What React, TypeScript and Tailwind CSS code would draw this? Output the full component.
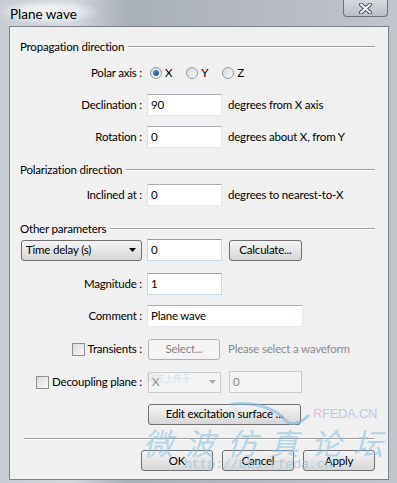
import React from "react";

const font = { fontFamily: 'Lato, "Noto Sans", Arial, sans-serif' };

function TextBox({ value, w = "w-[75px]", disabled = false, focus = false }: { value: string; w?: string; disabled?: boolean; focus?: boolean }) {
  return (
    <div
      className={`${w} h-[22px] flex items-center px-[3px] border ${
        disabled
          ? "bg-[#f4f4f4] border-[#c9cbcf] text-[#8a8a8a]"
          : focus
          ? "bg-white border-[#c5daed] border-t-[#7da2ce] text-black"
          : "bg-white border-[#e3e9ef] border-t-[#abadb3] border-l-[#e2e3ea] text-black"
      }`}
    >
      {value}
    </div>
  );
}

function Button({ label, w, disabled = false }: { label: string; w: string; disabled?: boolean }) {
  return (
    <div
      className={`${w} h-[21px] flex items-center justify-center rounded-[3px] border ${
        disabled
          ? "border-[#adb2b5] bg-[#f4f4f4] text-[#838383]"
          : "border-[#707070] bg-linear-to-b from-[#f4f4f4] via-[#e6e6e6] to-[#d6d6d6] text-black"
      }`}
    >
      {label}
    </div>
  );
}

function Radio({ checked, label }: { checked?: boolean; label: string }) {
  return (
    <div className="flex items-center gap-[3px]">
      <div className="w-[12px] h-[12px] rounded-full border border-[#9a9a9a] bg-linear-to-br from-[#d8d8d8] to-[#fafafa] flex items-center justify-center">
        {checked && <div className="w-[6px] h-[6px] rounded-full bg-linear-to-br from-[#5a8fcf] to-[#1f4f9a]" />}
      </div>
      <span>{label}</span>
    </div>
  );
}

function Checkbox() {
  return <div className="w-[13px] h-[13px] border border-[#8f8f8f] bg-linear-to-br from-[#dcdcdc] to-[#f8f8f8] mr-[3px]" />;
}

function Header({ title, mt }: { title: string; mt: string }) {
  return (
    <div className={`${mt} h-[14px] flex items-center gap-[4px] pr-[3px]`}>
      <span className="whitespace-nowrap">{title}</span>
      <div className="flex-1 h-[2px] border-t border-t-[#a0a0a0] border-b border-b-white" />
    </div>
  );
}

function Row({ label, mt, children, lead }: { label: string; mt: string; children: React.ReactNode; lead?: React.ReactNode }) {
  return (
    <div className={`${mt} h-[22px] flex items-center`}>
      <div className="w-[122px] flex items-center justify-end whitespace-nowrap">
        {lead}
        <span>{label}</span>
      </div>
      <div className="ml-[5px] flex items-center">{children}</div>
    </div>
  );
}

export default function App() {
  return (
    <div
      className="relative w-[397px] h-[483px] overflow-hidden text-[11.5px] tracking-[-0.2px] text-black bg-[linear-gradient(90deg,#c9cdd3_0%,#d4d8dd_18%,#a9afb9_32%,#b3b8c1_60%,#c1c6cd_100%)]"
      style={font}
    >
      {/* title bar */}
      <div className="h-[26px] flex items-start">
        <div className="pl-[10px] pt-[4px] text-[13.5px] tracking-normal text-black bg-[radial-gradient(ellipse_at_center,#eef0f3_30%,transparent_75%)] pr-[20px]">
          Plane wave
        </div>
        <div className="ml-auto mr-[9px] w-[45px] h-[17px] rounded-b-[4px] border border-t-0 border-[#6b717a] bg-linear-to-b from-[#d5d9df] to-[#b8bec7] flex items-center justify-center">
          <svg width="13" height="11" viewBox="0 0 13 11">
            <path d="M2 1.5 L11 9.5 M11 1.5 L2 9.5" stroke="#4a4f57" strokeWidth="4" strokeLinecap="round" />
            <path d="M2 1.5 L11 9.5 M11 1.5 L2 9.5" stroke="#ffffff" strokeWidth="2" strokeLinecap="round" />
          </svg>
        </div>
      </div>

      {/* client area */}
      <div className="ml-[9px] mr-[8px] h-[454px] border border-[#7b8089] bg-[#f0f0f0] px-[10px] pt-[13px]">
        <Header title="Propagation direction" mt="mt-0" />
        <Row label="Polar axis :" mt="mt-[8px]">
          <div className="flex items-center gap-[14px] ml-[3px]">
            <Radio checked label="X" />
            <Radio label="Y" />
            <Radio label="Z" />
          </div>
        </Row>
        <Row label="Declination :" mt="mt-[10px]">
          <TextBox value="90" />
          <span className="ml-[6px] whitespace-nowrap">degrees from X axis</span>
        </Row>
        <Row label="Rotation :" mt="mt-[10px]">
          <TextBox value="0" />
          <span className="ml-[6px] whitespace-nowrap">degrees about X, from Y</span>
        </Row>

        <Header title="Polarization direction" mt="mt-[15px]" />
        <Row label="Inclined at :" mt="mt-[7px]">
          <TextBox value="0" />
          <span className="ml-[6px] whitespace-nowrap">degrees to nearest-to-X</span>
        </Row>

        <Header title="Other parameters" mt="mt-[16px]" />
        <div className="mt-[3px] h-[22px] flex items-center">
          <div className="ml-[1px] w-[121px] h-[21px] rounded-[3px] border border-[#707070] bg-linear-to-b from-[#f4f4f4] via-[#e6e6e6] to-[#d6d6d6] flex items-center pl-[4px] pr-[5px]">
            <span className="flex-1">Time delay (s)</span>
            <svg width="7" height="4" viewBox="0 0 7 4">
              <path d="M0 0 H7 L3.5 4 Z" fill="#000" />
            </svg>
          </div>
          <div className="ml-[5px]">
            <TextBox value="0" focus />
          </div>
          <div className="ml-[7px]">
            <Button label="Calculate..." w="w-[73px]" />
          </div>
        </div>
        <Row label="Magnitude :" mt="mt-[12px]">
          <TextBox value="1" focus />
        </Row>
        <Row label="Comment :" mt="mt-[10px]">
          <TextBox value="Plane wave" w="w-[156px]" />
        </Row>
        <Row label="Transients :" mt="mt-[11px]" lead={<Checkbox />}>
          <div className="ml-[1px]">
            <Button label="Select..." w="w-[72px]" disabled />
          </div>
          <span className="ml-[8px] whitespace-nowrap text-[#8a8a8a]">Please select a waveform</span>
        </Row>
        <Row label="Decoupling plane :" mt="mt-[11px]" lead={<Checkbox />}>
          <div className="ml-[1px] w-[73px] h-[21px] border border-[#c9cbcf] bg-[#f4f4f4] text-[#8a8a8a] flex items-center pl-[3px] pr-[4px]">
            <span className="flex-1">X</span>
            <svg width="7" height="4" viewBox="0 0 7 4">
              <path d="M0 0 H7 L3.5 4 Z" fill="#a8a8a8" />
            </svg>
          </div>
          <div className="ml-[8px]">
            <TextBox value="0" w="w-[73px]" disabled />
          </div>
        </Row>
        <div className="mt-[10px] h-[22px] flex items-center">
          <div className="ml-[128px]">
            <Button label="Edit excitation surface ..." w="w-[153px]" />
          </div>
        </div>
        <div className="mt-[13px] ml-[4px] mr-[4px] h-[2px] border-t border-t-[#a0a0a0] border-b border-b-white" />
        <div className="mt-[10px] flex items-center justify-end gap-[9px] pr-[3px]">
          <Button label="OK" w="w-[72px]" />
          <Button label="Cancel" w="w-[72px]" />
          <Button label="Apply" w="w-[72px]" />
        </div>
      </div>

      {/* watermark */}
      <div className="pointer-events-none absolute left-0 top-0 w-full h-full tracking-normal">
        <div
          className="absolute left-[146px] top-[372px] text-[9px] text-[#a9c3d8] opacity-40"
          style={{ fontFamily: '"Noto Sans CJK SC", sans-serif' }}
        >
          网友上传于
        </div>
        <svg className="absolute left-[230px] top-[398px] opacity-60" width="80" height="30" viewBox="0 0 80 30">
          <path d="M2 6 C 25 4, 45 10, 55 22 C 60 28, 70 26, 78 18" stroke="#7fb6dc" strokeWidth="3" fill="none" strokeLinecap="round" />
        </svg>
        <div className="absolute left-[313px] top-[404px] text-[13px] tracking-[-0.3px] opacity-80" style={{ fontFamily: '"Liberation Sans", Arial, sans-serif' }}>
          <span className="text-[#e3b6d8]">R</span>
          <span className="text-[#b7bde0]">FEDA.CN</span>
        </div>
        <div
          className="absolute left-[143px] top-[424px] text-[30px] leading-[36px] tracking-[12px] text-[#8fc2e4] opacity-60 italic"
          style={{ fontFamily: '"Noto Sans CJK SC", sans-serif' }}
        >
          微波仿真论坛
        </div>
        <div
          className="absolute left-[184px] top-[458px] text-[13px] leading-[14px] text-[#95c4e0] opacity-70"
          style={{ fontFamily: '"Liberation Mono", monospace' }}
        >
          http://bbs.rfeda.cn
        </div>
      </div>
    </div>
  );
}
